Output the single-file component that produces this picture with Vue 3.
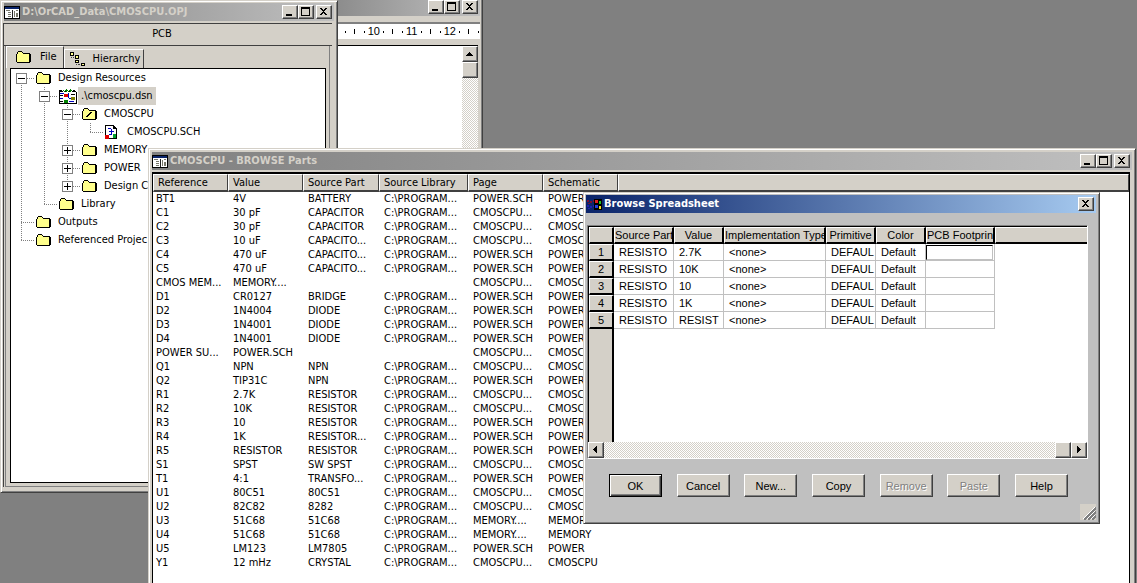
<script setup>
import { ref } from 'vue'

const rulerMarks = ['', '10', '11', '12']

const tree = [
  { guides: ['minus-top'], icon: 'folder', label: 'Design Resources' },
  { guides: ['line', 'minus'], icon: 'design', label: '.\\cmoscpu.dsn', selected: true },
  { guides: ['line', 'line', 'minus'], icon: 'root', label: 'CMOSCPU' },
  { guides: ['line', 'line', 'line', 'end'], icon: 'page', label: 'CMOSCPU.SCH' },
  { guides: ['line', 'line', 'plus'], icon: 'folder', label: 'MEMORY' },
  { guides: ['line', 'line', 'plus'], icon: 'folder', label: 'POWER' },
  { guides: ['line', 'line', 'plus-end'], icon: 'folder', label: 'Design C' },
  { guides: ['line', 'end'], icon: 'folder', label: 'Library' },
  { guides: ['tee'], icon: 'folder', label: 'Outputs' },
  { guides: ['end'], icon: 'folder', label: 'Referenced Projec' }
]
const isBox = (g) => g.startsWith('minus') || g.startsWith('plus')
const hasTop = (g) => g !== 'minus-top'
const hasBottom = (g) => !g.endsWith('end')
const hasRight = (g) => g !== 'line'

const partColumns = ['Reference', 'Value', 'Source Part', 'Source Library', 'Page', 'Schematic']
const L = 'C:\\PROGRAM...'
const PW = ['POWER.SCH', 'POWER']
const CP = ['CMOSCPU...', 'CMOSCPU']
const MM = ['MEMORY....', 'MEMORY']
const parts = [
  ['BT1', '4V', 'BATTERY', L, ...PW],
  ['C1', '30 pF', 'CAPACITOR', L, ...CP],
  ['C2', '30 pF', 'CAPACITOR', L, ...CP],
  ['C3', '10 uF', 'CAPACITO...', L, ...CP],
  ['C4', '470 uF', 'CAPACITO...', L, ...PW],
  ['C5', '470 uF', 'CAPACITO...', L, ...PW],
  ['CMOS MEM...', 'MEMORY....', '', '', ...CP],
  ['D1', 'CR0127', 'BRIDGE', L, ...PW],
  ['D2', '1N4004', 'DIODE', L, ...PW],
  ['D3', '1N4001', 'DIODE', L, ...PW],
  ['D4', '1N4001', 'DIODE', L, ...PW],
  ['POWER SU...', 'POWER.SCH', '', '', ...CP],
  ['Q1', 'NPN', 'NPN', L, ...CP],
  ['Q2', 'TIP31C', 'NPN', L, ...PW],
  ['R1', '2.7K', 'RESISTOR', L, ...CP],
  ['R2', '10K', 'RESISTOR', L, ...CP],
  ['R3', '10', 'RESISTOR', L, ...PW],
  ['R4', '1K', 'RESISTOR...', L, ...PW],
  ['R5', 'RESISTOR', 'RESISTOR', L, ...PW],
  ['S1', 'SPST', 'SW SPST', L, ...CP],
  ['T1', '4:1', 'TRANSFO...', L, ...PW],
  ['U1', '80C51', '80C51', L, ...CP],
  ['U2', '82C82', '8282', L, ...CP],
  ['U3', '51C68', '51C68', L, ...MM],
  ['U4', '51C68', '51C68', L, ...MM],
  ['U5', 'LM123', 'LM7805', L, ...PW],
  ['Y1', '12 mHz', 'CRYSTAL', L, ...CP]
]

const sheetColumns = ['Source Part', 'Value', 'Implementation Type', 'Primitive', 'Color', 'PCB Footprint']
const sheetValues = ['2.7K', '10K', '10', '1K', 'RESIST']
const footprint = ref('')

const actions = [
  { label: 'OK', primary: true },
  { label: 'Cancel' },
  { label: 'New...' },
  { label: 'Copy' },
  { label: 'Remove', disabled: true },
  { label: 'Paste', disabled: true },
  { label: 'Help' }
]
</script>

<template>
  <main class="desktop">
    <!-- Schematic editor window -->
    <section class="window editor" aria-label="Schematic editor">
      <header class="titlebar">
        <span class="title"></span>
        <button class="cap" aria-label="Minimize"><svg viewBox="0 0 12 10"><path d="M2 7h6v2h-6z" /></svg></button>
        <button class="cap" aria-label="Maximize"><svg viewBox="0 0 12 10"><path d="M1 0h9v9h-9zM2 2v6h7v-6z" fill-rule="evenodd" /></svg></button>
        <button class="cap close" aria-label="Close"><svg viewBox="0 0 12 10"><path d="M2 1h2v1h1v1h1v-1h1v-1h2v1h-1v1h-1v1h-1v1h1v1h1v1h1v1h-2v-1h-1v-1h-1v1h-1v1h-2v-1h1v-1h1v-1h1v-1h-1v-1h-1v-1h-1z" /></svg></button>
      </header>
      <div class="ruler">
        <div v-for="m in rulerMarks" :key="m" class="ruler-unit">
          <span>{{ m }}</span><i class="dot"></i><i class="tick"></i><i class="dot"></i>
        </div>
      </div>
      <div class="canvas">
        <div class="paper"></div>
        <div class="vscroll dither">
          <button class="scroll-btn" aria-label="Scroll up"><svg viewBox="0 0 8 8"><path d="M0 6h7v-1h-1v-1h-1v-1h-1v-1h-1v1h-1v1h-1v1h-1z" /></svg></button>
          <div class="thumb"></div>
        </div>
      </div>
    </section>

    <!-- Project manager window -->
    <section class="window project" aria-label="Project manager">
      <header class="titlebar">
        <svg class="app-icon" viewBox="0 0 16 13"><path fill="#000" d="M0 0h16v13h-16z" /><path fill="#fff" d="M1 3h14v9h-14z" /><path fill="#0a246a" d="M1 1h14v2h-14z" /><path fill="#77776a" d="M2 4h4v1h-4zM4 6h3v1h-3zM4 8h3v1h-3zM4 10h3v1h-3zM10 5h1v6h-1zM12 4h2v1h-2zM12 7h2v4h-2z" /><path fill="#222" d="M8 4h1v8h-1z" /></svg>
        <span class="title">D:\OrCAD_Data\CMOSCPU.OPJ</span>
        <button class="cap" aria-label="Minimize"><svg viewBox="0 0 12 10"><path d="M2 7h6v2h-6z" /></svg></button>
        <button class="cap" aria-label="Maximize"><svg viewBox="0 0 12 10"><path d="M1 0h9v9h-9zM2 2v6h7v-6z" fill-rule="evenodd" /></svg></button>
        <button class="cap close" aria-label="Close"><svg viewBox="0 0 12 10"><path d="M2 1h2v1h1v1h1v-1h1v-1h2v1h-1v1h-1v1h-1v1h1v1h1v1h1v1h-2v-1h-1v-1h-1v1h-1v1h-2v-1h1v-1h1v-1h1v-1h-1v-1h-1v-1h-1z" /></svg></button>
      </header>
      <div class="project-body">
        <div class="kind">PCB</div>
        <div class="pages">
          <div class="tabs" role="tablist">
            <button class="tab active" role="tab" aria-selected="true">
              <svg width="15" height="12" viewBox="0 0 15 12"><path fill="#000" d="M2 0h4v1h1v1h7v1h1v8h-1v1h-13v-1h-1v-8h1v-2h1z" /><path fill="#ffff8c" d="M2 1h4v1h1v1h6v8h-12v-8h1z" /></svg>
              File
            </button>
            <button class="tab" role="tab" aria-selected="false">
              <svg width="17" height="15" viewBox="0 0 17 15"><path fill="#000" d="M1 0h4v4h-4zM6 3h4v4h-4zM6 8h4v3h-4zM12 11h4v3h-4z" /><path fill="#ffff8c" d="M2 1h2v2h-2zM7 4h2v2h-2zM7 9h2v1h-2zM13 12h2v1h-2z" /><path fill="#444" d="M2 5h1v1h-1zM4 5h1v1h-1zM7 12h1v1h-1zM9 12h2v1h-2z" /></svg>
              Hierarchy
            </button>
          </div>
          <ul class="tree" role="tree">
            <li v-for="node in tree" :key="node.label" role="treeitem">
              <span v-for="(g, i) in node.guides" :key="i" class="guide">
                <svg width="23" height="18" viewBox="0 0 23 18" stroke="#808080" stroke-dasharray="1 1">
                  <path v-if="hasTop(g)" d="M10.5 0V9" />
                  <path v-if="hasBottom(g)" d="M10.5 10V18" />
                  <path v-if="hasRight(g)" d="M10 9.5H23" />
                </svg>
                <button v-if="isBox(g)" class="expander" :aria-label="'Toggle ' + node.label">
                  <svg width="9" height="9" viewBox="0 0 9 9"><path d="M1 4h7v1h-7z" /><path v-if="g.startsWith('plus')" d="M4 1h1v7h-1z" /></svg>
                </button>
              </span>
              <span class="node-icon">
                <svg v-if="node.icon === 'folder'" width="15" height="12" viewBox="0 0 15 12"><path fill="#000" d="M2 0h4v1h1v1h7v1h1v8h-1v1h-13v-1h-1v-8h1v-2h1z" /><path fill="#ffff8c" d="M2 1h4v1h1v1h6v8h-12v-8h1z" /></svg>
                <svg v-else-if="node.icon === 'root'" width="15" height="12" viewBox="0 0 15 12"><path fill="#000" d="M2 0h4v1h1v1h7v1h1v8h-1v1h-13v-1h-1v-8h1v-2h1z" /><path fill="#ffff8c" d="M2 1h4v1h1v1h6v8h-12v-8h1z" /><path fill="#000" d="M4 8h1v-1h1v-1h1v-1h1v-1h2v1h-1v1h-1v1h-1v1h-1v1h-2z" /></svg>
                <svg v-else-if="node.icon === 'design'" width="18" height="15" viewBox="0 0 18 15"><path fill="#000" d="M0 1h3v1h1v1h1v-1h1v-1h1v1h1v1h1v-1h1v-1h1v1h1v1h1v-1h1v-1h2v1h1v1h1v12h-18z" /><path fill="#fff" d="M1 3h16v11h-16z" /><path fill="#008000" d="M4 1h1v1h1v-1h1v-1h1v1h1v1h1v-1h1v-1h1v1h1v1h-1v1h-1v-1h-1v1h-1v-1h-1v1h-1v-1h-1v1h-1zM5 11h4v3h-4z" /><path fill="#0000c0" d="M1 4h4v1h-4zM9 4h1v5h-1zM10 9h3v1h-3zM1 9h3v1h-3zM10 12h5v1h-5z" /><path fill="#e00000" d="M5 5h4v3h-4z" /><path fill="#808000" d="M12 8h4v3h-4z" /><path fill="#000" d="M1 6h3v1h-3zM12 5h4v1h-4zM1 12h3v1h-3z" /></svg>
                <svg v-else width="12" height="14" viewBox="0 0 12 14"><path fill="#000" d="M0 0h9v1h1v1h1v1h1v11h-12z" /><path fill="#fff" d="M1 1h7v3h3v9h-10z" /><path fill="#0000c0" d="M3 3h3v1h-3zM4 6h5v1h-5zM6 4h1v6h-1zM4 9h2v1h-2z" /><path fill="#e00000" d="M0 10h4v4h-4z" /><path fill="#00a030" d="M8 9h3v4h-3z" /></svg>
              </span>
              <span class="label" :class="{ selected: node.selected }">{{ node.label }}</span>
            </li>
          </ul>
        </div>
      </div>
    </section>

    <!-- Parts browser window -->
    <section class="window browser" aria-label="Browse parts">
      <header class="titlebar">
        <svg class="app-icon" viewBox="0 0 16 13"><path fill="#000" d="M0 0h16v13h-16z" /><path fill="#fff" d="M1 3h14v9h-14z" /><path fill="#0a246a" d="M1 1h14v2h-14z" /><path fill="#77776a" d="M2 4h4v1h-4zM4 6h3v1h-3zM4 8h3v1h-3zM4 10h3v1h-3zM10 5h1v6h-1zM12 4h2v1h-2zM12 7h2v4h-2z" /><path fill="#222" d="M8 4h1v8h-1z" /></svg>
        <span class="title">CMOSCPU - BROWSE Parts</span>
        <button class="cap" aria-label="Minimize"><svg viewBox="0 0 12 10"><path d="M2 7h6v2h-6z" /></svg></button>
        <button class="cap" aria-label="Maximize"><svg viewBox="0 0 12 10"><path d="M1 0h9v9h-9zM2 2v6h7v-6z" fill-rule="evenodd" /></svg></button>
        <button class="cap close" aria-label="Close"><svg viewBox="0 0 12 10"><path d="M2 1h2v1h1v1h1v-1h1v-1h2v1h-1v1h-1v1h-1v1h1v1h1v1h1v1h-2v-1h-1v-1h-1v1h-1v1h-2v-1h1v-1h1v-1h1v-1h-1v-1h-1v-1h-1z" /></svg></button>
      </header>
      <div class="list">
        <table class="parts">
          <colgroup><col class="w75" /><col class="w75" /><col class="w76" /><col class="w89" /><col class="w75" /><col class="w75" /><col /></colgroup>
          <thead>
            <tr><th v-for="c in partColumns" :key="c" scope="col">{{ c }}</th><th></th></tr>
          </thead>
          <tbody>
            <tr v-for="row in parts" :key="row[0]">
              <td v-for="(cell, i) in row" :key="i">{{ cell }}</td><td></td>
            </tr>
          </tbody>
        </table>
      </div>
    </section>

    <!-- Spreadsheet dialog -->
    <section class="window dialog" role="dialog" aria-label="Browse Spreadsheet">
      <header class="titlebar blue">
        <svg class="app-icon" viewBox="0 0 16 13"><path fill="#7a1030" d="M1 2h2v2h-2zM4 3h2v2h-2zM7 2h1v2h-1zM2 5h2v1h-2z" /><path fill="#2020b0" d="M1 7h2v2h-2zM4 8h2v2h-2zM7 7h1v2h-1zM2 10h2v1h-2z" /><path fill="#000" d="M8 1h8v11h-8z" /><path fill="#e02020" d="M9 2h3v3h-3z" /><path fill="#20c020" d="M13 3h2v3h-2z" /><path fill="#2040e0" d="M9 7h3v3h-3z" /><path fill="#f0e020" d="M13 8h2v3h-2z" /></svg>
        <span class="title">Browse Spreadsheet</span>
        <button class="cap close" aria-label="Close"><svg viewBox="0 0 12 10"><path d="M2 1h2v1h1v1h1v-1h1v-1h2v1h-1v1h-1v1h-1v1h1v1h1v1h1v1h-2v-1h-1v-1h-1v1h-1v1h-2v-1h1v-1h1v-1h1v-1h-1v-1h-1v-1h-1z" /></svg></button>
      </header>
      <div class="dialog-body">
        <div class="sheet">
          <div class="sheet-view">
            <table class="cells">
              <colgroup><col class="w25" /><col class="w60" /><col class="w50" /><col class="w102" /><col class="w50" /><col class="w50" /><col class="w69" /><col /></colgroup>
              <thead>
                <tr><th></th><th v-for="c in sheetColumns" :key="c" scope="col">{{ c }}</th><th class="rest"></th></tr>
              </thead>
              <tbody>
                <tr v-for="(v, i) in sheetValues" :key="i">
                  <th scope="row">{{ i + 1 }}</th>
                  <td>RESISTO</td>
                  <td>{{ v }}</td>
                  <td>&lt;none&gt;</td>
                  <td>DEFAUL</td>
                  <td>Default</td>
                  <td class="foot"><input v-if="i === 0" v-model="footprint" type="text" aria-label="PCB Footprint" /></td>
                  <td class="rest"></td>
                </tr>
              </tbody>
            </table>
            <div class="row-rail"></div>
          </div>
          <div class="hscroll dither">
            <button class="scroll-btn" aria-label="Scroll left"><svg viewBox="0 0 8 8"><path d="M5 0v7h-1v-1h-1v-1h-1v-1h-1v-1h1v-1h1v-1h1v-1z" /></svg></button>
            <span class="spacer"></span>
            <div class="thumb"></div>
            <button class="scroll-btn" aria-label="Scroll right"><svg viewBox="0 0 8 8"><path d="M2 0v7h1v-1h1v-1h1v-1h1v-1h-1v-1h-1v-1h-1v-1z" /></svg></button>
          </div>
        </div>
        <div class="actions">
          <button v-for="a in actions" :key="a.label" class="push" :class="{ primary: a.primary }" :disabled="a.disabled">{{ a.label }}</button>
        </div>
      </div>
      <svg class="grip" width="16" height="16" viewBox="0 0 16 16" aria-hidden="true"><path d="M4 16L16 4M8 16L16 8M12 16L16 12" stroke="#808080" stroke-width="2" /><path d="M3 15L15 3M7 15L15 7M11 15L15 11" stroke="#fff" /></svg>
    </section>
  </main>
</template>

<style>
html,
body,
#app {
  height: 100%;
}
body {
  margin: 0;
  overflow: hidden;
}
</style>

<style scoped>
* {
  box-sizing: border-box;
}
.desktop {
  position: relative;
  height: 100%;
  overflow: hidden;
  background: #808080;
  color: #000;
  font: 11px/14px "DejaVu Sans Condensed", "Noto Sans", sans-serif;
}
svg {
  display: block;
  shape-rendering: crispEdges;
}
button,
input {
  margin: 0;
  padding: 0;
  border-radius: 0;
  color: inherit;
  font: inherit;
}
.window {
  position: absolute;
  display: flex;
  flex-direction: column;
  padding: 2px;
  border: 1px solid;
  border-color: #d4d0c8 #404040 #404040 #d4d0c8;
  background: #d4d0c8;
  box-shadow: inset 1px 1px #fff, inset -1px -1px #808080;
}
.titlebar {
  display: flex;
  flex: none;
  align-items: center;
  height: 18px;
  padding: 0 2px 0 0;
  background: linear-gradient(to right, #808080, #c0c0c0);
  color: #d4d0c8;
  font-weight: bold;
}
.titlebar.blue {
  background: linear-gradient(to right, #0a246a, #a6caf0);
  color: #fff;
}
.title {
  flex: 1;
  padding-left: 2px;
  white-space: nowrap;
}
.app-icon {
  width: 16px;
  height: 13px;
}
.cap,
.scroll-btn,
.thumb {
  display: grid;
  flex: none;
  place-items: center;
  width: 16px;
  height: 14px;
  border: 1px solid;
  border-color: #fff #404040 #404040 #fff;
  background: #d4d0c8;
  box-shadow: inset -1px -1px #808080;
}
.cap svg {
  width: 12px;
  height: 10px;
}
.cap.close {
  margin-left: 2px;
}
.scroll-btn,
.thumb {
  height: 16px;
}
.scroll-btn svg {
  width: 8px;
  height: 8px;
}
.dither {
  background: repeating-conic-gradient(#fff 0 25%, #d4d0c8 0 50%) 0 0 / 2px 2px;
}

/* Schematic editor */
.editor {
  top: -5px;
  left: 300px;
  width: 183px;
  height: 300px;
}
.ruler {
  display: flex;
  flex: none;
  height: 17px;
  margin-top: 6px;
  padding-left: 28px;
  overflow: hidden;
  border-top: 2px solid #808080;
  background: #fff;
}
.ruler-unit {
  display: grid;
  flex: none;
  grid-template-columns: repeat(4, 1fr);
  place-items: center;
  width: 38px;
  font: 11px/15px "Liberation Sans", sans-serif;
}
.ruler-unit span {
  min-width: 0;
}
.ruler-unit i {
  width: 1px;
  background: #000;
}
.dot {
  height: 2px;
}
.tick {
  height: 5px;
}
.canvas {
  display: flex;
  flex: 1;
  margin: 6px 2px 0 0;
  border-top: 1px solid #000;
}
.paper {
  flex: 1;
  background: #fff;
}
.vscroll {
  width: 16px;
}

/* Project manager */
.project {
  top: 0;
  left: 0;
  width: 338px;
  height: 493px;
}
.project .titlebar,
.browser .titlebar {
  margin: 0 1px;
}
.project-body {
  display: flex;
  flex: 1;
  flex-direction: column;
  margin: 2px 3px 3px 0;
  border: solid #404040;
  border-width: 1px 0 0 1px;
}
.kind {
  height: 22px;
  padding-right: 12px;
  border-bottom: 1px solid #404040;
  line-height: 20px;
  text-align: center;
}
.pages {
  display: flex;
  flex: 1;
  flex-direction: column;
  margin: 0 2px 0 1px;
  padding: 0 3px 3px 0;
  border: solid #808080;
  border-width: 0 1px 1px;
}
.tabs {
  display: flex;
  align-items: flex-end;
}
.tab {
  display: flex;
  gap: 6px;
  align-items: center;
  height: 19px;
  padding: 0 3px 0 4px;
  border: solid;
  border-width: 1px 1px 0;
  border-color: #fff #404040 #404040 #fff;
  background: #d4d0c8;
}
.tab.active {
  gap: 9px;
  height: 22px;
  padding: 0 7px 2px 9px;
}
.tree {
  flex: 1;
  margin: 0 0 0 4px;
  padding: 0;
  border: 1px solid #000;
  background: #fff;
  list-style: none;
}
.tree li {
  display: flex;
  align-items: center;
  height: 18px;
  white-space: nowrap;
}
.guide {
  position: relative;
  width: 23px;
  height: 18px;
}
.expander {
  position: absolute;
  top: 4px;
  left: 5px;
  width: 11px;
  height: 11px;
  border: 1px solid #808080;
  background: #fff;
}
.node-icon {
  width: 21px;
  padding-left: 2px;
}
.label {
  padding: 2px 3px;
}
.label.selected {
  background: #d4d0c8;
}

/* Parts browser */
.browser {
  top: 148px;
  right: 1px;
  bottom: -20px;
  left: 148px;
}
.browser .titlebar {
  margin-top: 1px;
}
.list {
  flex: 1;
  margin: 2px 3px 3px 1px;
  border: 1px solid #000;
  border-top-width: 2px;
  background: #fff;
}
table {
  width: 100%;
  border-spacing: 0;
  border-collapse: separate;
  table-layout: fixed;
}
th,
td {
  overflow: hidden;
  padding: 0;
  font-weight: normal;
  text-align: left;
  white-space: nowrap;
}
.parts th {
  height: 18px;
  padding-left: 4px;
  border: solid;
  border-width: 1px 1px 2px;
  border-color: #fff #404040 #404040 #fff;
  background: #d4d0c8;
}
.parts td {
  height: 14px;
  padding-left: 5px;
}
.parts td:first-child {
  padding-left: 3px;
}
.w25 { width: 25px; }
.w50 { width: 50px; }
.w60 { width: 60px; }
.w69 { width: 69px; }
.w75 { width: 75px; }
.w76 { width: 76px; }
.w89 { width: 89px; }
.w102 { width: 102px; }

/* Spreadsheet dialog */
.dialog {
  top: 192px;
  left: 583px;
  width: 517px;
  height: 332px;
  background: #c0c0c0;
}
.dialog .titlebar {
  margin-right: 1px;
}
.dialog-body {
  display: flex;
  flex: 1;
  flex-direction: column;
  padding: 12px 9px 24px 1px;
  font: 11px/14px "Liberation Sans", sans-serif;
}
.sheet {
  display: flex;
  flex: 1;
  flex-direction: column;
  border: 1px solid;
  border-color: #808080 #fff #fff #808080;
}
.sheet-view {
  display: flex;
  flex: 1;
  flex-direction: column;
  border: solid #000;
  border-width: 1px 0 0 1px;
  background: #fff;
}
.cells th {
  height: 17px;
  border: solid;
  border-width: 1px 2px 2px 1px;
  border-color: #fff #000 #000 #fff;
  background: #d4d0c8;
  text-align: center;
}
.cells thead th {
  height: 16px;
}
.cells th.rest {
  border-right: 0;
}
.cells td {
  height: 17px;
  padding-left: 5px;
  border: solid #c0c0c0;
  border-width: 0 1px 1px 0;
}
.cells td.rest {
  border: 0;
}
.cells td.foot {
  padding: 0;
}
.foot input {
  display: block;
  width: 67px;
  height: 15px;
  border: 1px solid;
  border-color: #000 #c0c0c0 #c0c0c0 #000;
  background: #fff;
  outline: 0;
}
.row-rail {
  flex: 1;
  width: 25px;
  border-right: 2px solid #000;
  background: #d4d0c8;
}
.hscroll {
  display: flex;
  height: 16px;
}
.spacer {
  flex: 1;
}
.actions {
  display: flex;
  justify-content: space-between;
  margin: 15px 20px 0 22px;
}
.push {
  width: 53px;
  height: 23px;
  border: 1px solid;
  border-color: #fff #404040 #404040 #fff;
  background: #d4d0c8;
  box-shadow: inset -1px -1px #808080;
}
.push.primary {
  border-color: #000;
  box-shadow: inset 1px 1px #fff, inset -1px -1px #404040, inset -2px -2px #808080;
}
.push:disabled {
  color: #808080;
  text-shadow: 1px 1px #fff;
}
.grip {
  position: absolute;
  right: 3px;
  bottom: 3px;
  background: #d4d0c8;
}
</style>
